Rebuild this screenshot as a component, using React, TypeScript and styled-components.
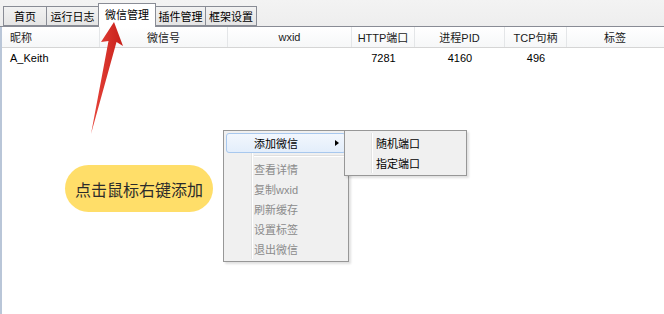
import React from "react";
import styled, { createGlobalStyle } from "styled-components";

const Global = createGlobalStyle`
  html, body { margin: 0; padding: 0; background: #ffffff; }
  body { width: 664px; height: 314px; overflow: hidden; font-family: "Liberation Sans", "Noto Sans CJK SC", sans-serif; font-size: 11px; color: #000; }
  #root { width: 664px; height: 314px; }
`;

const Window = styled.div`
  position: relative;
  width: 664px;
  height: 314px;
  display: flex;
  flex-direction: column;
  background: #ffffff;
`;

const TabBar = styled.div`
  height: 27px;
  flex: none;
  display: flex;
  align-items: flex-end;
  padding-left: 3px;
  background: linear-gradient(#f3f3f3, #eeeeee);
  border-bottom: 1px solid #898c95;
  box-sizing: border-box;
`;

const Tab = styled.div<{ $active?: boolean; $w: number }>`
  box-sizing: border-box;
  width: ${(p) => p.$w}px;
  height: ${(p) => (p.$active ? 24 : 20)}px;
  margin-bottom: ${(p) => (p.$active ? -1 : 0)}px;
  margin-left: ${(p) => (p.$active ? 0 : 0)}px;
  border: 1px solid #898c95;
  border-bottom: ${(p) => (p.$active ? "none" : "1px solid #898c95")};
  margin-right: -1px;
  background: ${(p) => (p.$active ? "#ffffff" : "linear-gradient(#f2f2f2, #e5e5e5)")};
  display: flex;
  align-items: center;
  justify-content: center;
  padding-bottom: ${(p) => (p.$active ? 3 : 0)}px;
  font-size: 11px;
  position: relative;
  z-index: ${(p) => (p.$active ? 2 : 1)};
`;

const Pane = styled.div`
  flex: 1;
  border-left: 2px solid #b9c6d8;
  background: #ffffff;
`;

const cols = "98px 128px 124px 63px 90px 62px 1fr";

const HeaderRow = styled.div`
  display: grid;
  grid-template-columns: ${cols};
  height: 20px;
  background: linear-gradient(#ffffff, #f6f7f8);
  border-bottom: 1px solid #d5d5d5;
`;

const HeadCell = styled.div<{ $left?: boolean; $sep?: boolean }>`
  display: flex;
  align-items: center;
  justify-content: ${(p) => (p.$left ? "flex-start" : "center")};
  padding-left: ${(p) => (p.$left ? 8 : 0)}px;
  border-right: 1px solid ${(p) => (p.$sep ? "#e4e6e8" : "transparent")};
  color: #1a1a1a;
`;

const DataRow = styled.div`
  display: grid;
  grid-template-columns: ${cols};
  height: 20px;
`;

const Cell = styled.div<{ $left?: boolean }>`
  display: flex;
  align-items: center;
  justify-content: ${(p) => (p.$left ? "flex-start" : "center")};
  padding-left: ${(p) => (p.$left ? 8 : 0)}px;
  color: #000;
`;

const Menu = styled.div<{ $x: number; $y: number; $w: number; $gutter: number }>`
  position: absolute;
  left: ${(p) => p.$x}px;
  top: ${(p) => p.$y}px;
  width: ${(p) => p.$w}px;
  box-sizing: border-box;
  padding: 2px;
  background: #f0f0f0;
  border: 1px solid #979797;
  box-shadow: 2px 2px 2px rgba(0, 0, 0, 0.12);
  z-index: 5;
  &::before {
    content: "";
    position: absolute;
    top: 2px;
    bottom: 2px;
    left: ${(p) => p.$gutter}px;
    width: 1px;
    background: #e2e3e3;
    border-right: 1px solid #ffffff;
  }
`;

const Item = styled.div<{ $hover?: boolean; $disabled?: boolean; $indent: number }>`
  position: relative;
  height: 20px;
  box-sizing: border-box;
  display: flex;
  align-items: center;
  padding-left: ${(p) => p.$indent}px;
  color: ${(p) => (p.$disabled ? "#8b8b8b" : "#000")};
  border-radius: 3px;
  border: 1px solid ${(p) => (p.$hover ? "#a8c8ee" : "transparent")};
  background: ${(p) => (p.$hover ? "linear-gradient(#f2f7fd, #e3eefb)" : "transparent")};
  z-index: 1;
`;

const Arrow = styled.span`
  position: absolute;
  right: 6px;
  top: 6px;
  width: 0;
  height: 0;
  border-top: 3.5px solid transparent;
  border-bottom: 3.5px solid transparent;
  border-left: 4px solid #000;
`;

const Separator = styled.div`
  height: 6px;
  margin-left: 28px;
  display: flex;
  align-items: center;
  &::after {
    content: "";
    flex: 1;
    height: 1px;
    background: #e0e0e0;
    border-bottom: 1px solid #ffffff;
  }
`;

const Pill = styled.div`
  position: absolute;
  left: 65px;
  top: 165px;
  width: 148px;
  height: 47px;
  border-radius: 24px;
  background: #ffde69;
  display: flex;
  align-items: center;
  justify-content: center;
  font-family: "Noto Sans CJK SC", sans-serif;
  font-size: 16px;
  color: #2b2b2b;
  z-index: 4;
`;

const ArrowSvg = styled.svg`
  position: absolute;
  left: 0;
  top: 0;
  z-index: 6;
  pointer-events: none;
`;

export default function App() {
  return (
    <>
      <Global />
      <Window>
        <TabBar>
          <Tab $w={44}>首页</Tab>
          <Tab $w={53}>运行日志</Tab>
          <Tab $w={58} $active>微信管理</Tab>
          <Tab $w={51}>插件管理</Tab>
          <Tab $w={52}>框架设置</Tab>
        </TabBar>
        <Pane>
          <HeaderRow>
            <HeadCell $left $sep>昵称</HeadCell>
            <HeadCell $sep>微信号</HeadCell>
            <HeadCell $sep>wxid</HeadCell>
            <HeadCell $sep>HTTP端口</HeadCell>
            <HeadCell $sep>进程PID</HeadCell>
            <HeadCell $sep>TCP句柄</HeadCell>
            <HeadCell>标签</HeadCell>
          </HeaderRow>
          <DataRow>
            <Cell $left>A_Keith</Cell>
            <Cell />
            <Cell />
            <Cell>7281</Cell>
            <Cell>4160</Cell>
            <Cell>496</Cell>
            <Cell />
          </DataRow>
        </Pane>

        <Menu $x={223} $y={130} $w={126} $gutter={27}>
          <Item $hover $indent={27}>
            添加微信
            <Arrow />
          </Item>
          <Separator />
          <Item $disabled $indent={27}>查看详情</Item>
          <Item $disabled $indent={27}>复制wxid</Item>
          <Item $disabled $indent={27}>刷新缓存</Item>
          <Item $disabled $indent={27}>设置标签</Item>
          <Item $disabled $indent={27}>退出微信</Item>
        </Menu>

        <Menu $x={344} $y={130} $w={123} $gutter={26}>
          <Item $indent={28}>随机端口</Item>
          <Item $indent={28}>指定端口</Item>
        </Menu>

        <Pill>点击鼠标右键添加</Pill>

        <ArrowSvg width="664" height="314" viewBox="0 0 664 314">
          <defs>
            <linearGradient id="redg" x1="0" y1="0" x2="1" y2="0">
              <stop offset="0" stopColor="#e8453c" />
              <stop offset="1" stopColor="#c61f19" />
            </linearGradient>
          </defs>
          <polygon
            points="114,22 123,46 116.5,42 91,134 108.5,41 101,42"
            fill="url(#redg)"
          />
        </ArrowSvg>
      </Window>
    </>
  );
}
